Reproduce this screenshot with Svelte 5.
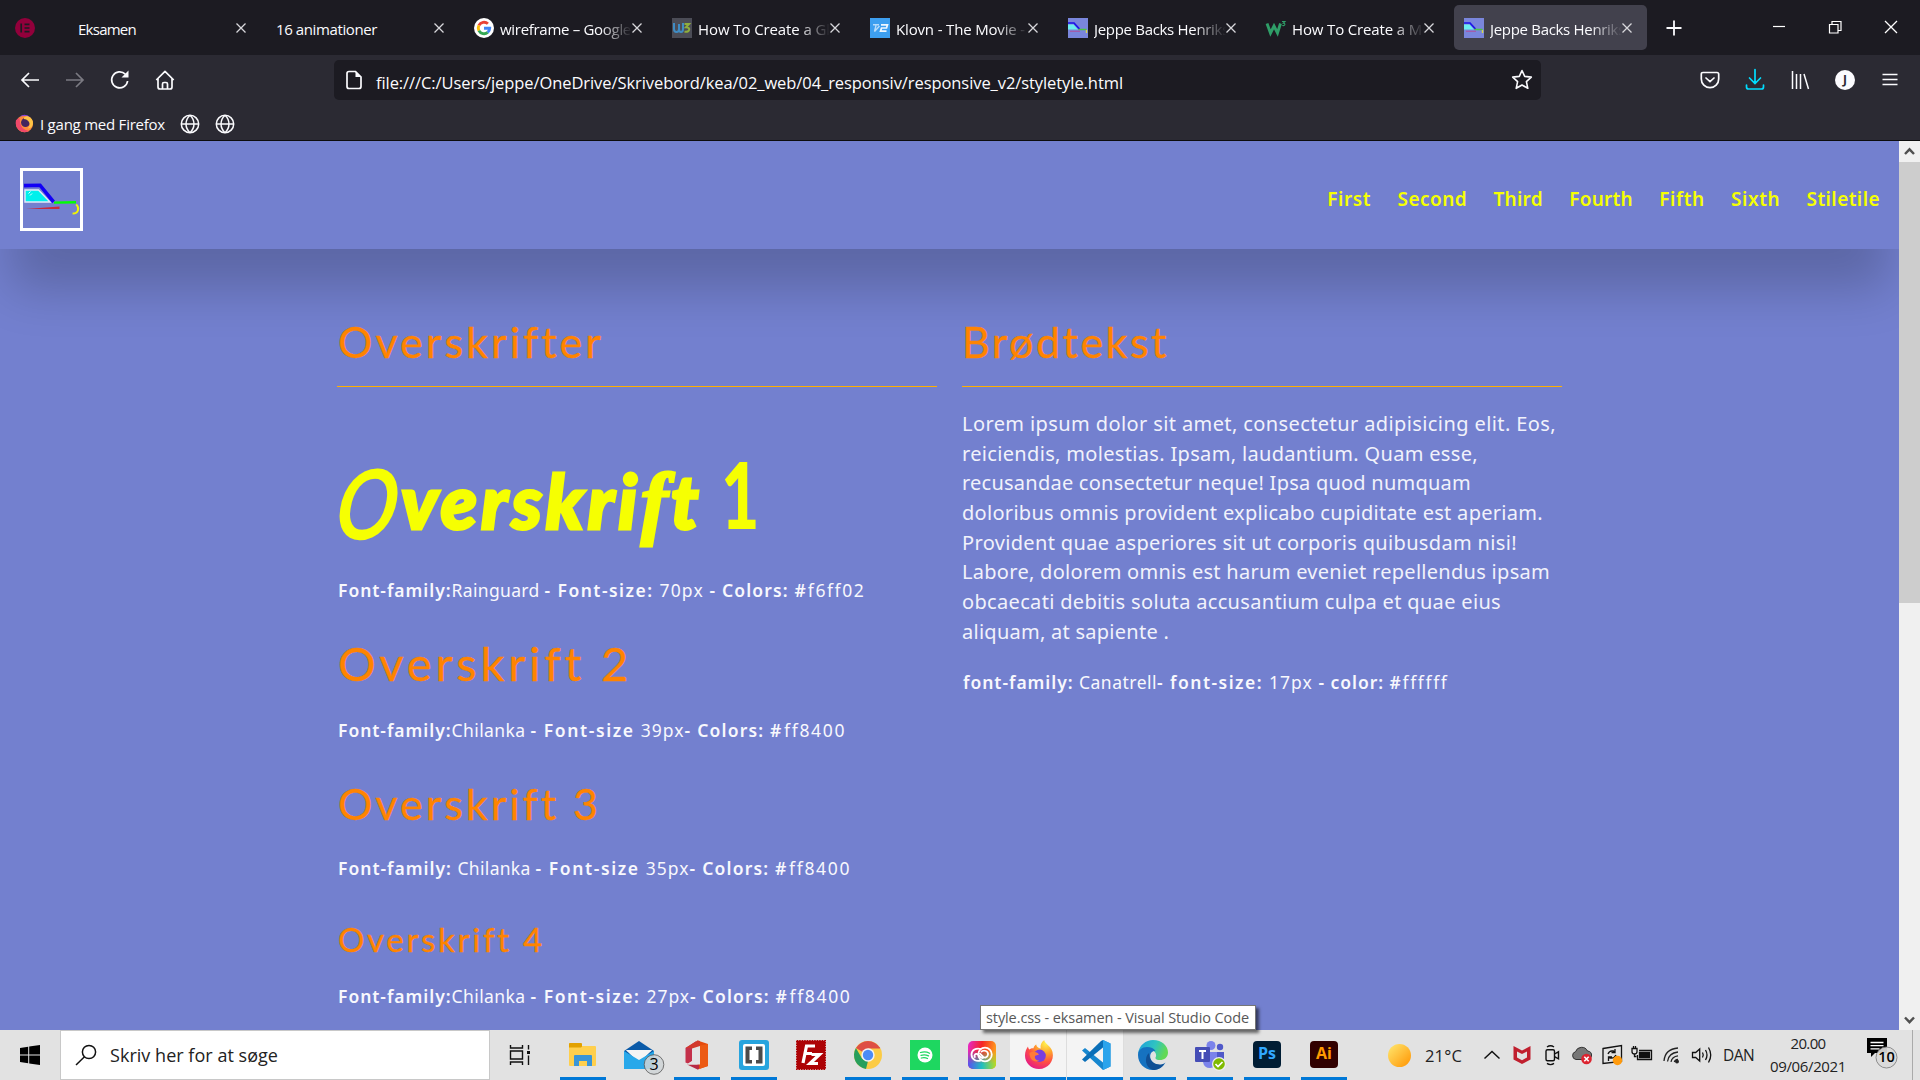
<script>
  // Spreads the letters of a text run evenly over a given width.
  function fit(node, width) {
    const natural = node.getBoundingClientRect().width;
    const count = node.textContent.length;
    node.style.letterSpacing = `${(width - natural) / count}px`;
  }

  const tabs = [
    { title: 'Eksamen', icon: '', w: 58 },
    { title: '16 animationer', icon: '', w: 101 },
    { title: 'wireframe – Google', icon: 'google', w: 131 },
    { title: 'How To Create a Glo', icon: 'w3dark', w: 141 },
    { title: 'Klovn - The Movie -', icon: 'tv2', w: 129 },
    { title: 'Jeppe Backs Henriks', icon: 'car', w: 135 },
    { title: 'How To Create a Mo', icon: 'w3', w: 139 },
    { title: 'Jeppe Backs Henriks', icon: 'car', w: 135, active: true },
  ];

  const nav = [
    ['First', 44], ['Second', 69.5], ['Third', 49.5], ['Fourth', 63.5],
    ['Fifth', 45.5], ['Sixth', 49], ['Stiletile', 73.5],
  ];

  // Each run: text, bold, advance width
  const cap1 = [['Font-family:', 1, 113.5], ['Rainguard ', 0, 93], ['- Font-size: ', 1, 115], ['70px ', 0, 50], ['- Colors: ', 1, 85], ['#', 1, 13.3], ['f6ff02', 0, 57.5]];
  const cap2 = [['Font-family:', 1, 113.5], ['Chilanka ', 0, 79], ['- Font-size ', 1, 110.3], ['39px', 0, 43.8], ['- Colors: ', 1, 85.5], ['#', 1, 14], ['ff8400', 0, 62]];
  const cap3 = [['Font-family: ', 1, 119.5], ['Chilanka ', 0, 78], ['- Font-size ', 1, 110.3], ['35px', 0, 43.8], ['- Colors: ', 1, 85.5], ['#', 1, 14], ['ff8400', 0, 62]];
  const cap4 = [['Font-family:', 1, 113.5], ['Chilanka ', 0, 79], ['- Font-size: ', 1, 116], ['27px', 0, 43.5], ['- Colors: ', 1, 85.5], ['#', 1, 14], ['ff8400', 0, 62]];
  const capBody = [['font-family: ', 1, 116], ['Canatrell', 0, 78], ['- font-size: ', 1, 112], ['17px ', 0, 49.5], ['- color: ', 1, 71], ['#', 1, 13], ['ffffff', 0, 46]];

  const body = [
    ['Lorem ipsum dolor sit amet, consectetur adipisicing elit. Eos,', 594],
    ['reiciendis, molestias. Ipsam, laudantium. Quam esse,', 516],
    ['recusandae consectetur neque! Ipsa quod numquam', 509],
    ['doloribus omnis provident explicabo cupiditate est aperiam.', 581],
    ['Provident quae asperiores sit ut corporis quibusdam nisi!', 555],
    ['Labore, dolorem omnis est harum eveniet repellendus ipsam', 588],
    ['obcaecati debitis soluta accusantium culpa et quae eius', 539],
    ['aliquam, at sapiente .', 207],
  ];

  const apps = [
    { id: 'explorer', open: true }, { id: 'mail' }, { id: 'office', open: true },
    { id: 'brackets', open: true }, { id: 'filezilla' }, { id: 'chrome', open: true },
    { id: 'spotify', open: true }, { id: 'cc', open: true },
    { id: 'firefox', open: true, lit: true }, { id: 'vscode', open: true, lit: true },
    { id: 'edge', open: true }, { id: 'teams', open: true },
    { id: 'ps', open: true }, { id: 'ai', open: true },
  ];
</script>

{#snippet caption(runs)}
  <p class="caption">{#each runs as [text, bold, width]}<span class:bold use:fit={width}>{text}</span>{/each}</p>
{/snippet}

{#snippet carArt()}
  <path d="M1 14.6 17 14.2 30.6 31" fill="none" stroke="#1200f5" stroke-width="3.6" />
  <path d="M2 19h13.500l11.500 12H2z" fill="#00f0ec" stroke="#e4e8fa" stroke-width="1.400" />
  <path d="M5.500 22.500l2-2M7 24.500l2-2" stroke="#e8ffff" stroke-width="1" />
  <path d="M31 31.600 53 31.200" stroke="#0f0" stroke-width="2.400" />
  <path d="M3 37.900 36.500 35.600v2.400z" fill="#c8283c" />
  <path d="M53.200 33.300c3.500 3.500 2.500 9.400-3.600 9.200" fill="none" stroke="#f3f600" stroke-width="1.900" />
{/snippet}

{#snippet globe()}
  <svg class="globe" width="20" height="20" viewBox="0 0 20 20" fill="none" stroke="#fbfbfe" stroke-width="1.500">
    <circle cx="10" cy="10" r="8.700" /><path d="M1.300 10h17.400M10 1.300c-5.300 5-5.300 12.400 0 17.400M10 1.300c5.300 5 5.300 12.400 0 17.400" />
  </svg>
{/snippet}

{#snippet firefoxArt()}
  <defs>
    <radialGradient id="fx" cx=".75" cy=".1" r="1"><stop offset="0" stop-color="#fff44f" /><stop offset=".35" stop-color="#ffa22c" /><stop offset=".65" stop-color="#ff4f42" /><stop offset="1" stop-color="#e3178a" /></radialGradient>
  </defs>
  <path d="M15 29C7 29 1 23 1 15.500c0-4 1.500-7 3-9 .2 1.300.5 2 1.200 3C7 8.200 8 8 9.500 8.200 9.800 6.600 11 5 12.300 4.500c0 2 1.700 3.500 4.500 4-.800-3.500 1-7 3.500-8.200.600 4 6.700 5.200 8.200 11.700C30.600 21 24 29 15 29z" fill="url(#fx)" />
  <circle cx="15.600" cy="15.800" r="6.200" fill="#7a3ee0" />
  <path d="M5.500 13c3-2 7.500-1.500 9.500 1.500-1.500.800-3 .6-4 1.500-.600 2.500 1 4.500 4.500 4.700-5 2.300-10-1-10-7.700z" fill="#ff7a38" />
{/snippet}

<div class="screen">
  <div class="tabbar">
    <div class="pinned">
      <svg width="20" height="20" viewBox="0 0 20 20"><circle cx="10" cy="10" r="10" fill="#92003b" /><path d="M6.200 5.500v9M9.500 6.300h5M9.500 10h5M9.500 13.700h5" stroke="#1c1b22" stroke-width="1.700" /></svg>
    </div>
    {#each tabs as tab}
      <div class="tab" class:active={tab.active}>
        {#if tab.icon}
          <svg class="favicon" width="20" height="20" viewBox="0 0 20 20">
            {#if tab.icon === 'google'}
              <circle cx="10" cy="10" r="10" fill="#fff" />
              <g fill="none" stroke-width="2.900"><path d="M13.900 5.800A5.700 5.700 0 0 0 4.900 7.400" stroke="#ea4335" /><path d="M4.900 7.400a5.700 5.700 0 0 0 0 5.200" stroke="#fbbc05" /><path d="M4.900 12.600a5.700 5.700 0 0 0 8.800 1.700" stroke="#34a853" /><path d="M13.700 14.300a5.700 5.700 0 0 0 2-4.100H10" stroke="#4285f4" /></g>
            {:else if tab.icon === 'w3dark'}
              <rect width="20" height="20" fill="#4b4c56" /><path d="M2 5v6q0 3 2.500 3T7 11V6v5q0 3 2 3t2-3V5" fill="none" stroke="#3f8cc4" stroke-width="2" /><path d="M12.500 6h4.500l-3 3.200c5 0 4 5-1.500 4.500" fill="none" stroke="#8fae3c" stroke-width="2" />
            {:else if tab.icon === 'tv2'}
              <rect width="20" height="20" fill="#3d9ff0" /><path d="M3 6.800h6M6 7.500l-1.500 6L9.500 8" fill="none" stroke="#b8dcfb" stroke-width="1.400" /><path d="M11 6.800h6.500l-1 3.200h-5l-1 3.200h6" fill="none" stroke="#f0f8ff" stroke-width="1.700" />
            {:else if tab.icon === 'w3'}
              <path d="M1 5.500 4.500 15 8 8l3.500 7L14.500 5.500" fill="none" stroke="#2f9e68" stroke-width="2.900" /><path d="M16 3.500h3l-1.700 1.700c2.500 0 2 3-1 2.300" fill="none" stroke="#2f9e68" stroke-width="1.100" />
            {:else}
              <rect width="20" height="20" fill="#7a86dc" /><path d="M0 5h6l5.500 6" fill="none" stroke="#1b12e8" stroke-width="1.700" /><path d="M0 6.500h5.500l4.500 5H0z" fill="#6ceef0" /><path d="M10.500 11.500h8" stroke="#4ec443" stroke-width="1.500" /><path d="M2 13.300h10" stroke="#a558a8" stroke-width="1.200" /><path d="M18.500 12v3" stroke="#d8d84a" stroke-width="1.400" />
            {/if}
          </svg>
        {/if}
        <div class="tabtitle" class:faded={tab.icon}><span use:fit={tab.w}>{tab.title}</span></div>
        <svg class="tabclose" width="10" height="10" viewBox="0 0 10 10"><path d="M.5.5l9 9M9.500.5l-9 9" stroke="#d8d8dc" stroke-width="1.300" /></svg>
      </div>
    {/each}
    <svg class="newtab" width="16" height="16" viewBox="0 0 16 16"><path d="M8 .5v15M.5 8h15" stroke="#fbfbfe" stroke-width="1.800" /></svg>
    <div class="winbuttons">
      <svg width="56" height="20" viewBox="0 0 56 20"><path d="M22 9.500h12" stroke="#fff" stroke-width="1.200" /></svg>
      <svg width="56" height="20" viewBox="0 0 56 20" fill="none" stroke="#fff" stroke-width="1.200"><path d="M22.500 7.500h8.500v8.500h-8.500zM25 7.500V4.500h9v9h-3" /></svg>
      <svg width="56" height="20" viewBox="0 0 56 20"><path d="M22 4l12 12M34 4 22 16" stroke="#fff" stroke-width="1.300" /></svg>
    </div>
  </div>

  <div class="toolbar">
    <div class="navicons">
      <svg width="20" height="20" viewBox="0 0 20 20" fill="none" stroke="#fbfbfe" stroke-width="1.700"><path d="M19 10H2M9 3l-7 7 7 7" /></svg>
      <svg width="20" height="20" viewBox="0 0 20 20" fill="none" stroke="#7b7a82" stroke-width="1.700"><path d="M1 10h17M11 3l7 7-7 7" /></svg>
      <svg width="20" height="20" viewBox="0 0 20 20" fill="none" stroke="#fbfbfe" stroke-width="1.700"><path d="M17.600 11A8 8 0 1 1 15.300 4.200" /><path d="M18.500.5v7h-7z" fill="#fbfbfe" stroke="none" /></svg>
      <svg width="20" height="20" viewBox="0 0 20 20" fill="none" stroke="#fbfbfe" stroke-width="1.700" stroke-linejoin="round"><path d="M1.300 10 10 1.300 18.700 10M3 8.500V17q0 2 2 2h10q2 0 2-2V8.500M7.500 19v-5q0-1.500 1.500-1.500h2q1.500 0 1.500 1.500v5" /></svg>
    </div>
    <div class="urlbar">
      <svg width="16" height="20" viewBox="0 0 16 20" fill="none" stroke="#fbfbfe" stroke-width="1.700"><path d="M3 1.500h6.500L15 7v9.500q0 2-2 2H3q-2 0-2-2v-13q0-2 2-2z" /><path d="M9.500 1v6h6z" fill="#fbfbfe" stroke="none" /></svg>
      <span class="url"><span use:fit={747}>file:///C:/Users/jeppe/OneDrive/Skrivebord/kea/02_web/04_responsiv/responsive_v2/styletyle.html</span></span>
      <svg class="star" width="22" height="22" viewBox="0 0 22 22"><path d="M11 1.500l2.700 5.900 6.600.7-4.900 4.500 1.400 6.700L11 16l-5.800 3.300 1.400-6.700L1.700 8.100l6.600-.7z" fill="none" stroke="#fbfbfe" stroke-width="1.600" stroke-linejoin="round" /></svg>
    </div>
    <div class="tools">
      <svg width="20" height="20" viewBox="0 0 20 20" fill="none" stroke="#fbfbfe" stroke-width="1.700" stroke-linecap="round"><path d="M3 2.500h14q1.700 0 1.700 1.700V9a8.700 8.700 0 0 1-17.400 0V4.200Q1.300 2.500 3 2.500zM6 8l4 3.700L14 8" /></svg>
      <svg width="20" height="20" viewBox="0 0 20 20" fill="none" stroke="#00ddff" stroke-width="1.700" stroke-linecap="round"><path d="M10 -.5v13.500M4.500 8l5.500 5.500L15.500 8M1.500 15v2q0 2 2 2h13q2 0 2-2v-2" /></svg>
      <svg width="20" height="20" viewBox="0 0 20 20" fill="none" stroke="#fbfbfe" stroke-width="1.500"><path d="M2.500 1v18M6.500 4v15M10.500 4v15M14 4l4.500 15" /></svg>
      <svg width="20" height="20" viewBox="0 0 20 20"><circle cx="10" cy="10" r="10" fill="#fbfbfe" /><text x="10" y="14.300" text-anchor="middle" class="avatar">J</text></svg>
      <svg width="20" height="20" viewBox="0 0 20 20"><path d="M2.500 4.500h15M2.500 9.500h15M2.500 14.500h15" stroke="#fbfbfe" stroke-width="1.500" /></svg>
    </div>
  </div>

  <div class="bookmarks">
    <svg width="19" height="19" viewBox="0 0 30 30"><circle cx="15" cy="15.500" r="13.500" fill="#ff8a3c" /><path d="M1.500 10q-2 10 5 15.500T23 27q-7-1-11-5T7 6q-3 1-5.500 4z" fill="#f0486a" /><circle cx="16.500" cy="13.500" r="7" fill="#45265e" /><path d="M7 4.500Q16-3 25 6 16 1 7 4.500z" fill="#8a45d8" /><path d="M19 3q11 3 9 14-2 6-8 6 6-6 1-12-3-3-7-3 0-4 5-5z" fill="#ffc445" /></svg>
    <span class="bookmark"><span use:fit={125}>I gang med Firefox</span></span>
    {@render globe()}
    {@render globe()}
  </div>

  <div class="viewport">
    <div class="page">
      <header>
        <svg class="logo" width="57" height="57" viewBox="0 0 57 57">{@render carArt()}</svg>
        <nav>{#each nav as [label, width]}<a href="#top"><span use:fit={width}>{label}</span></a>{/each}</nav>
      </header>
      <main>
        <section>
          <h2 class="title"><span use:fit={265}>Overskrifter</span></h2>
          <h1><span class="swash">O</span><span class="script" use:fit={240}>verskri</span><span class="eff">f</span><span class="script tee">t</span><span class="one">1</span></h1>
          {@render caption(cap1)}
          <h2 class="big"><span use:fit={293}>Overskrift 2</span></h2>
          {@render caption(cap2)}
          <h3><span use:fit={262}>Overskrift 3</span></h3>
          {@render caption(cap3)}
          <h4><span use:fit={206}>Overskrift 4</span></h4>
          {@render caption(cap4)}
        </section>
        <section>
          <h2 class="title second"><span use:fit={207}>Brødtekst</span></h2>
          <div class="body">{#each body as [line, width]}<p><span use:fit={width}>{line}</span></p>{/each}</div>
          {@render caption(capBody)}
        </section>
      </main>
    </div>
    <div class="scrollbar">
      <svg width="21" height="21" viewBox="0 0 21 21"><path d="M6 13l4.500-4.700L15 13" fill="none" stroke="#505050" stroke-width="2.400" /></svg>
      <div class="thumb"></div>
      <svg width="21" height="21" viewBox="0 0 21 21"><path d="M6 8.500l4.500 4.700L15 8.500" fill="none" stroke="#505050" stroke-width="2.400" /></svg>
    </div>
  </div>

  <footer class="taskbar">
    <div class="start"><svg width="20" height="20" viewBox="0 0 20 20"><path d="M0 2.900 8.200 1.700v7.800H0zM9.200 1.600 20 0v9.500H9.200zM0 10.500h8.200v7.800L0 17.100zM9.200 10.500H20V20L9.200 18.400z" /></svg></div>
    <div class="search">
      <svg width="22" height="22" viewBox="0 0 22 22" fill="none" stroke="#111" stroke-width="1.500"><circle cx="14" cy="8" r="6.600" /><path d="M9.500 12.800 1 21" /></svg>
      <span use:fit={168}>Skriv her for at søge</span>
    </div>
    <div class="taskview"><svg width="22" height="20" viewBox="0 0 22 20" fill="none" stroke="#111" stroke-width="1.400"><path d="M1.500 0v3h12V0M1.500 6h12v8h-12zM1.500 20v-3h12v3M19.500 0v4.500M19.500 10.500V20" /><path d="M18 6h3v3h-3z" fill="#111" stroke="none" /></svg></div>
    {#each apps as app}
      <div class="app" class:open={app.open} class:lit={app.lit}>
        <svg width="30" height="30" viewBox="0 0 30 30">
          {#if app.id === 'explorer'}
            <path d="M1 4q0-1 1-1h10l2 3h13q1 0 1 1v18q0 1-1 1H2q-1 0-1-1z" fill="#ffcf4d" /><path d="M1 4q0-1 1-1h11q1 0 1 1v2.500l-1 1H1z" fill="#e2a100" /><path d="M6 26V16q0-1 1-1h16q1 0 1 1v10h-5v-5h-8v5z" fill="#3a95d8" />
          {:else if app.id === 'mail'}
            <path d="M-1 11 14 1l15 10v18H-1z" fill="#0a5aa8" /><path d="M1 10h26l-13 13z" fill="#f4f4f4" /><path d="M-1 11 14 20 29 11v18H-1z" fill="#28a8ea" /><path d="M1 10.500h26L14 19z" fill="#f4f4f4" />
            <circle cx="29" cy="24.500" r="9.800" fill="#cfd3d6" fill-opacity=".85" stroke="#555" stroke-width=".8" /><text x="29" y="29.500" text-anchor="middle" class="count">3</text>
          {:else if app.id === 'office'}
            <path d="M3.500 8 14 1.200l2 5-6 2.300V21l-4 2.500-2.500-1z" fill="#c4304a" /><path d="M15.500.5 26 4v22l-10.500 3.500z" fill="#e64a0c" /><path d="M18 1v7l-8 1.500V8L3.500 8 15.500.5z" fill="#d2382c" /><path d="M5 24.500h12V29l-1.500.5z" fill="#b82a44" /><path d="M10 8.500 18 6v18.500H5l5-3.200z" fill="#e4e4e4" /><path d="M18 5.500 26 4v22l-8 2.700z" fill="#ec5a14" />
          {:else if app.id === 'brackets'}
            <rect width="30" height="30" rx="3" fill="#27a4de" /><rect x="4" y="4" width="22" height="22" rx="2" fill="#fff" /><path d="M13 6.500H6.500v17H13v-3.500h-2.500V10H13zM17 6.500h6.500v17H17v-3.500h2.500V10H17z" fill="#4b4b4b" />
          {:else if app.id === 'filezilla'}
            <rect x=".7" y=".7" width="28.600" height="28.600" fill="#ad0306" stroke="#ad0306" stroke-width="1.400" stroke-dasharray="1.500 1" /><path d="M7 23 10.500 6H19M8.800 13.500H16M15.500 14.500h8l-9.500 9h8" fill="none" stroke="#fff" stroke-width="3.200" />
          {:else if app.id === 'chrome'}
            <circle cx="15" cy="15" r="14" fill="#fbcb45" /><path d="M15 15 2.900 8A14 14 0 0 1 27.100 8H15z" fill="#de4f44" /><path d="M2.900 8 9 18.500 15 21l-2 7.900A14 14 0 0 1 2.900 8z" fill="#279f5c" /><path d="M15 8h12.100" stroke="#de4f44" /><circle cx="15" cy="15" r="6.700" fill="#f3f3f3" /><circle cx="15" cy="15" r="5.200" fill="#4c8bf5" />
          {:else if app.id === 'spotify'}
            <rect width="30" height="30" fill="#1ed760" /><circle cx="15" cy="15" r="7.500" fill="#fff" /><path d="M10.500 12.500q5-1.500 9 .7M11 15.300q4-1.200 7.500.6M11.300 18q3.500-1 6.200.5" fill="none" stroke="#1ed760" stroke-width="1.300" stroke-linecap="round" />
          {:else if app.id === 'cc'}
            <defs><linearGradient id="cca" x1="0" x2="1" y1="0" y2=".2"><stop offset="0" stop-color="#e52ad0" /><stop offset=".5" stop-color="#f52525" /><stop offset="1" stop-color="#ff9a1e" /></linearGradient><linearGradient id="ccb" x1="0" x2="1"><stop offset="0" stop-color="#5a50f0" /><stop offset=".5" stop-color="#1fc0c0" /><stop offset="1" stop-color="#b8dc20" /></linearGradient><linearGradient id="ccm" x2="0" y2="1"><stop offset=".35" stop-color="#fff" stop-opacity="0" /><stop offset=".8" stop-color="#fff" /></linearGradient><mask id="ccmask"><rect width="30" height="30" fill="url(#ccm)" /></mask></defs>
            <rect x="1" y="1" width="28" height="28" rx="5" fill="url(#cca)" /><rect x="1" y="1" width="28" height="28" rx="5" fill="url(#ccb)" mask="url(#ccmask)" />
            <g fill="none" stroke="#fff" stroke-width="1.800"><circle cx="18" cy="14.500" r="6.800" /><path d="M14 9c-5-1.500-9.500 1-9.500 5.500 0 5 5 7.500 9.500 5.800" /><path d="M16.500 18c-3 .5-3.500-2-5.500-3.500-2.500-2-5 1.500-2.500 3M14 12c3-3 7.500-.5 7 2.700-.5 3-3.500 3.500-5 2L12.500 13" /></g>
          {:else if app.id === 'firefox'}
            {@render firefoxArt()}
          {:else if app.id === 'vscode'}
            <path d="M22 0 29.500 3.500v23L22 30 1 10.500 4 8l18 14.500z" fill="#1787cf" /><path d="M22 0v7.500L4 22 1 19.500 20 1z" fill="#0a6fb8" /><path d="M22 0 29.500 3.500v23L22 30z" fill="#2ba4ec" />
          {:else if app.id === 'edge'}
            <defs><linearGradient id="eg" x1="0" x2="1" y1="0" y2=".3"><stop offset="0" stop-color="#1c9de0" /><stop offset=".6" stop-color="#30c4c0" /><stop offset="1" stop-color="#62d955" /></linearGradient></defs>
            <path d="M0 14C1 5 8 0 15 0c9 0 15 6 15 12.500 0 5-4 7.500-8 7.500-5 0-5-2-4-3.500C19 13 15 9 10 9S1 12 0 14z" fill="url(#eg)" /><path d="M0 15c0-5 4-8 9-8 4 0 7 1.500 8.500 4-6-1-8 9 0 13 4 2 7 1 10-1.500C25 27 21 30 15 30 6 30 0 23 0 15z" fill="#1672c0" /><path d="M11 13c-5 4-4 15 4 17 5 0 9-2.500 11.500-6.500-4 2-15 2-15.500-10.500z" fill="#114f94" />
          {:else if app.id === 'teams'}
            <circle cx="16" cy="5.500" r="4.500" fill="#7b83eb" /><circle cx="25" cy="7" r="3.200" fill="#5059c9" /><path d="M20 12h9v8q0 4-5 5z" fill="#5059c9" /><path d="M9 12h13v9q-1 7-7 7t-7-6z" fill="#7b83eb" /><rect x="0" y="7" width="15" height="15" rx="1" fill="#454db6" /><path d="M4 11h7M7.500 11v8" stroke="#fff" stroke-width="2" /><circle cx="24" cy="24" r="7" fill="#eee" /><circle cx="24" cy="24" r="5.800" fill="#7fba00" /><path d="M20.500 24l2.500 2.500 4.500-4.500" fill="none" stroke="#fff" stroke-width="1.700" />
          {:else if app.id === 'ps'}
            <rect x="1" y="1" width="28" height="27" rx="4" fill="#001d34" /><text x="15" y="19" text-anchor="middle" class="adobe" fill="#31a8ff">Ps</text>
          {:else}
            <rect x="1" y="1" width="28" height="27" rx="4" fill="#310000" /><text x="15" y="19" text-anchor="middle" class="adobe" fill="#ff9a00">Ai</text>
          {/if}
        </svg>
      </div>
    {/each}
    <div class="weather">
      <svg width="23" height="23" viewBox="0 0 23 23"><defs><linearGradient id="sun" x1="0" y1="0" x2="1" y2="1"><stop offset=".1" stop-color="#ffe066" /><stop offset=".9" stop-color="#ff9c0c" /></linearGradient></defs><circle cx="11.500" cy="11.500" r="11.500" fill="url(#sun)" /></svg>
      <span use:fit={37}>21°C</span>
    </div>
    <div class="tray">
      <svg width="30" height="24" viewBox="0 0 30 24" fill="none" stroke="#111" stroke-width="1.500"><path d="M7.500 15.500 15 8.500l7.500 7" /></svg>
      <svg width="30" height="24" viewBox="0 0 30 24"><path d="M6.500 3 15 7.500 23.500 3v13.500L15 21l-8.500-4.500zM10 8.500v6l5 2.700 5-2.700v-6L15 11z" fill="#c01f2e" fill-rule="evenodd" /></svg>
      <svg width="30" height="24" viewBox="0 0 30 24" fill="none" stroke="#111" stroke-width="1.400"><rect x="9" y="6.700" width="8.500" height="11" rx="1.500" /><path d="M17.500 11l4-2.200v7l-4-2.200M10 4q3.500-2.500 7 0M10 20.400q3.500 2.500 7 0" /></svg>
      <svg width="30" height="24" viewBox="0 0 30 24"><path d="M9 16.500a4 4 0 0 1-.5-7.800A6.500 6.500 0 0 1 20.500 8q4.500.5 4 5-.5 3.500-4 3.500z" fill="#777" stroke="#333" /><circle cx="19.500" cy="16" r="5.300" fill="#dc2430" /><path d="M17.300 13.800l4.400 4.400M21.700 13.800l-4.400 4.400" stroke="#fff" stroke-width="1.600" /></svg>
      <svg width="30" height="24" viewBox="0 0 30 24" fill="none" stroke="#111" stroke-width="1.300"><path d="M6 5.500 24.500 2.500v16L6 20.500z" /><path d="M11 11q1.500-4 5.500-3l1.500 1M18 6v3.500h-3.500M19 12q-2 4-6 3l-1-.8M11.500 18v-4H15" /><circle cx="20.500" cy="17.500" r="4.700" fill="#ff9a0c" stroke="none" /></svg>
      <svg width="30" height="24" viewBox="0 0 30 24" fill="none" stroke="#111" stroke-width="1.300"><path d="M5 5.500h5v3a2.500 2.500 0 0 1-5 0zM6.500 5.500V3M8.500 5.500V3M7.500 11v2.500h2" /><path d="M12 7.500h12.500v9H10.500v-4.500" /><path d="M12.500 9.500h10v5h-10z" fill="#111" /></svg>
      <svg width="30" height="24" viewBox="0 0 30 24" fill="none" stroke="#222" stroke-width="1.300"><path d="M7 18Q8 6 21 5M10.500 18.500Q11.500 10 21 9M14 18.800Q15 13.500 21 12.800M17.300 19q.5-2.500 3.700-2.700" /><circle cx="20" cy="18.500" r="1.300" fill="#222" /></svg>
      <svg width="30" height="24" viewBox="0 0 30 24" fill="none" stroke="#111" stroke-width="1.300"><path d="M5.500 9.500h3.200l4-3.500v12l-4-3.500H5.500zM15.500 9.500q1.500 2.500 0 5M18.500 7q3 5 0 10M21.500 4.500q4.500 7.500 0 15" /></svg>
    </div>
    <div class="lang"><span use:fit={31}>DAN</span></div>
    <div class="clock"><div><span use:fit={35}>20.00</span></div><div><span use:fit={76}>09/06/2021</span></div></div>
    <div class="notes">
      <svg width="34" height="34" viewBox="0 0 34 34"><path d="M2 3h20v15H10l-4 4v-4H2z" fill="#000" /><path d="M5.500 7.500h13M5.500 10.700h13M5.500 13.900h9" stroke="#fff" stroke-width="1.300" /><circle cx="21.500" cy="22.500" r="10.500" fill="#dadada" fill-opacity=".93" stroke="#777" stroke-width=".8" /><text x="21.500" y="27.300" text-anchor="middle" class="ten">10</text></svg>
    </div>
    <div class="tooltip"><span use:fit={263}>style.css - eksamen - Visual Studio Code</span></div>
  </footer>
</div>

<style>
  :global(body) { margin: 0; overflow: hidden; }
  * { box-sizing: border-box; }
  svg { display: block; flex: none; overflow: visible; }
  span { display: inline-block; white-space: pre; }
  h1, h2, h3, h4, p { margin: 0; font-weight: 400; }
  .screen { width: 1920px; height: 1080px; display: flex; flex-direction: column; font-family: "Open Sans", "Noto Sans", sans-serif; color: #fbfbfe; overflow: hidden; }

  .tabbar { height: 55px; background: #1c1b22; display: flex; align-items: center; flex: none; }
  .pinned { width: 68px; padding-left: 15px; }
  .tab { width: 193px; height: 45px; margin-right: 5px; border-radius: 5px; display: flex; align-items: center; padding: 0 15px 0 10px; font-size: 15px; line-height: 20px; }
  .tab.active { background: #42414d; }
  .favicon { margin-right: 6px; }
  .tabtitle { flex: 1; overflow: hidden; padding-top: 2px; }
  .tabtitle.faded { -webkit-mask-image: linear-gradient(to right, #000 76%, transparent 100%); mask-image: linear-gradient(to right, #000 76%, transparent 100%); }
  .newtab { margin-left: 14px; }
  .winbuttons { margin-left: auto; display: flex; position: relative; left: -1px; top: -1px; }

  .toolbar { height: 50px; background: #2b2a33; display: flex; align-items: center; flex: none; }
  .navicons { display: flex; gap: 25px; padding-left: 20px; width: 334px; }
  .urlbar { width: 1207px; height: 40px; background: #1c1b22; border-radius: 5px; display: flex; align-items: center; padding: 0 8px 0 12px; }
  .url { margin-left: 14px; font-size: 16.500px; padding-top: 4px; }
  .star { margin-left: auto; }
  .tools { display: flex; gap: 25px; margin-left: 159px; }
  .avatar { font-size: 12px; font-weight: 700; fill: #2b2a33; }

  .bookmarks { height: 36px; background: #2b2a33; border-bottom: 1px solid #0c0c0d; display: flex; align-items: center; flex: none; padding: 2px 0 0 15px; }
  .bookmark { font-size: 15px; margin-left: 6px; }
  .globe { margin-left: 15px; }

  .viewport { height: 889px; display: flex; flex: none; }
  .page { width: 1899px; background: #7380cf; overflow: hidden; font-family: Lato, "Open Sans", sans-serif; }
  header { height: 108px; background: #7380cf; display: flex; align-items: center; justify-content: space-between; padding: 0 19px 0 20px; box-shadow: 0 50px 50px -10px rgba(0, 0, 0, .2); margin-bottom: 64px; }
  .logo { box-sizing: content-box; border: 3px solid #fff; margin-top: 9px; }
  nav { display: flex; gap: 26.400px; padding-top: 8px; font-family: "Noto Sans", "Open Sans", sans-serif; }
  nav a { color: #f6ff02; text-decoration: none; font-weight: 600; font-size: 19px; line-height: 24px; }
  main { display: flex; gap: 25px; padding-left: 337px; }
  section { width: 600px; }
  .title, .big, h3, h4 { color: #ff8400; padding-left: 1px; }
  .title span, .big span, h3 span, h4 span { -webkit-text-stroke: .4px #ff8400; }
  .title { font-size: 43px; line-height: 57px; height: 74px; border-bottom: 1px solid #ffb000; }
  .title.second { padding-left: 0; }
  .big { font-size: 47px; line-height: 62px; height: 60px; margin-top: 27px; margin-bottom: 23px; }
  h3 { font-size: 43px; line-height: 61px; height: 60px; margin: 28px 0 20px; }
  h4 { font-size: 33px; line-height: 40px; margin: 36px 0 22px; }
  h1 { height: 120px; margin: 48px 0 20px; color: #f6ff02; display: flex; align-items: baseline; line-height: 116px; padding-left: 3px; }
  .swash { font-size: 94px; font-style: italic; line-height: 116px; transform: scaleX(.85) skewX(-10deg) translateY(9px); transform-origin: left; width: 61px; -webkit-text-stroke: 3px #f6ff02; }
  .script { font-size: 74px; font-style: italic; font-weight: 900; -webkit-text-stroke: 3px #f6ff02; }
  .tee { width: 30px; }
  .eff { font-family: "Liberation Serif", serif; font-size: 80px; font-style: italic; font-weight: 700; width: 30px; -webkit-text-stroke: 3px #f6ff02; }
  .one { font-size: 92px; font-weight: 900; margin-left: 20px; transform: scaleX(.72); transform-origin: left; }
  .caption { height: 30px; line-height: 31px; font-family: "Noto Sans", "Open Sans", sans-serif; font-size: 17.500px; padding-left: 1px; white-space: nowrap; color: #f8f8fd; display: flex; }
  .caption .bold { font-weight: 600; }
  .body { margin-top: 22px; margin-bottom: 20px; font-family: "Noto Sans", "Open Sans", sans-serif; font-size: 20px; line-height: 29.700px; color: #f1f2fb; }
  .body p { height: 29.700px; white-space: nowrap; }

  .scrollbar { width: 21px; background: #f0f0f0; display: flex; flex-direction: column; }
  .thumb { height: 441px; background: #cdcdcd; margin-bottom: auto; }

  .taskbar { height: 50px; background: #e2e2e2; color: #222; display: flex; align-items: center; position: relative; flex: none; }
  .start { width: 60px; padding-left: 20px; }
  .search { width: 430px; height: 50px; background: #fff; border: 1px solid #c8c8c8; display: flex; align-items: center; gap: 13px; padding-left: 14px; font-size: 18px; }
  .taskview { width: 64px; padding-left: 19px; flex: none; }
  .app { width: 57px; height: 50px; padding: 10px 0 0 13.500px; flex: none; background: linear-gradient(#0078d7, #0078d7) center bottom / 0 3px no-repeat; }
  .app.open { background-size: 46px 3px; }
  .app.lit { background-color: #f4f4f4; background-size: 56px 3px; border-right: 1px solid #ddd; }
  .count { font-size: 16px; fill: #000; }
  .ten { font-size: 14.500px; fill: #000; font-weight: 600; }
  .adobe { font-size: 16px; font-weight: 700; }
  .weather { display: flex; align-items: center; gap: 14px; margin-left: 36px; width: 89px; font-size: 16.500px; flex: none; }
  .tray { display: flex; flex: none; }
  .lang { width: 52px; padding-left: 6px; font-size: 15.500px; flex: none; }
  .clock { width: 78px; text-align: center; font-size: 15px; line-height: 23px; flex: none; }
  .notes { margin-left: 18px; padding-top: 5px; width: 48px; height: 50px; border-right: 1px solid #aaa; flex: none; }
  .tooltip { position: absolute; left: 980px; top: -25px; width: 276px; height: 25px; background: #fff; border: 1px solid #767676; box-shadow: 3px 3px 3px rgba(0, 0, 0, .55); padding-left: 5px; font-size: 14.500px; line-height: 23px; color: #575757; }
</style>
